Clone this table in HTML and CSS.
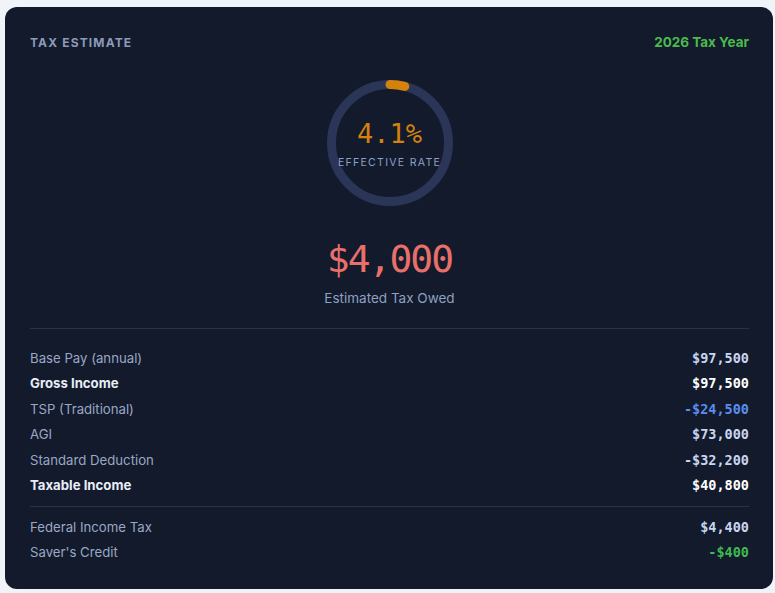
FILE: index.html
```html
<!DOCTYPE html>
<html>
<head>
<meta charset="utf-8">
<link rel="stylesheet" href="styles.css">
</head>
<body>
<div class="card">
  <div class="header">
    <span class="title">TAX ESTIMATE</span>
    <span class="year">2026 Tax Year</span>
  </div>
  <div class="gauge">
    <svg class="ring" width="126" height="126" viewBox="0 0 126 126">
      <circle cx="63" cy="63" r="58.5" fill="none" stroke="#2a3557" stroke-width="9"/>
      <circle cx="63" cy="63" r="58.5" fill="none" stroke="#d4820c" stroke-width="9" stroke-linecap="round" stroke-dasharray="15.07 400" transform="rotate(-90 63 63)"/>
    </svg>
    <div class="gauge-text">
      <div class="rate">4.1%</div>
      <div class="rate-label">EFFECTIVE RATE</div>
    </div>
  </div>
  <div class="owed">$4,000</div>
  <div class="owed-label">Estimated Tax Owed</div>
  <div class="rows top-border">
    <div class="row"><span class="lbl">Base Pay (annual)</span><span class="val">$97,500</span></div>
    <div class="row strong"><span class="lbl">Gross Income</span><span class="val">$97,500</span></div>
    <div class="row"><span class="lbl">TSP (Traditional)</span><span class="val blue">-$24,500</span></div>
    <div class="row"><span class="lbl">AGI</span><span class="val">$73,000</span></div>
    <div class="row"><span class="lbl">Standard Deduction</span><span class="val">-$32,200</span></div>
    <div class="row strong"><span class="lbl">Taxable Income</span><span class="val">$40,800</span></div>
  </div>
  <div class="rows top-border second">
    <div class="row"><span class="lbl">Federal Income Tax</span><span class="val">$4,400</span></div>
    <div class="row"><span class="lbl">Saver's Credit</span><span class="val green">-$400</span></div>
  </div>
</div>
</body>
</html>
```
FILE: styles.css
```css
html, body {
  margin: 0;
  padding: 0;
  background: #f0f4f8;
}
body {
  padding: 7px 2px 4px 5px;
  font-family: Inter, "Noto Sans", sans-serif;
}
.card {
  width: 768px;
  height: 582px;
  box-sizing: border-box;
  background: #121a2c;
  border-radius: 12px;
  padding: 28px 24px 0 25px;
  display: flex;
  flex-direction: column;
}
.header {
  display: flex;
  justify-content: space-between;
  align-items: center;
  height: 14px;
}
.title {
  font-size: 12px;
  font-weight: 700;
  letter-spacing: 1.15px;
  color: #8c9ab8;
}
.year {
  font-size: 13.5px;
  font-weight: 700;
  color: #4cbb4c;
}
.gauge {
  position: relative;
  width: 126px;
  height: 126px;
  margin: 31px auto 0;
}
.ring {
  display: block;
}
.gauge-text {
  position: absolute;
  inset: 0;
  display: flex;
  flex-direction: column;
  align-items: center;
  justify-content: center;
  padding-top: 2px;
}
.rate {
  font-family: "DejaVu Sans Mono", monospace;
  font-size: 27px;
  line-height: 30px;
  color: #d4820c;
}
.rate-label {
  font-size: 10.5px;
  letter-spacing: 1.3px;
  color: #8aa0c8;
  margin-top: 7px;
}
.owed {
  font-family: "DejaVu Sans Mono", monospace;
  font-size: 38px;
  letter-spacing: -2px;
  line-height: 44px;
  text-align: center;
  color: #e8706a;
  margin-top: 31px;
}
.owed-label {
  text-align: center;
  font-size: 13.5px;
  color: #8fa0c0;
  margin-top: 9px;
  line-height: 16px;
}
.rows {
  display: flex;
  flex-direction: column;
}
.top-border {
  border-top: 1px solid #27324f;
  margin-top: 22px;
  padding-top: 16px;
}
.second {
  margin-top: 8px;
  padding-top: 7px;
}
.row {
  display: flex;
  justify-content: space-between;
  align-items: center;
  height: 25.5px;
  font-size: 13.2px;
}
.lbl {
  color: #9aa8c4;
}
.val {
  font-family: "DejaVu Sans Mono", monospace;
  font-weight: 700;
  font-size: 13.5px;
  color: #c9d5ef;
}
.strong .lbl {
  color: #e8edf7;
  font-weight: 700;
}
.strong .val {
  color: #ffffff;
}
.blue {
  color: #5b8def;
}
.green {
  color: #3fb950;
}
```
